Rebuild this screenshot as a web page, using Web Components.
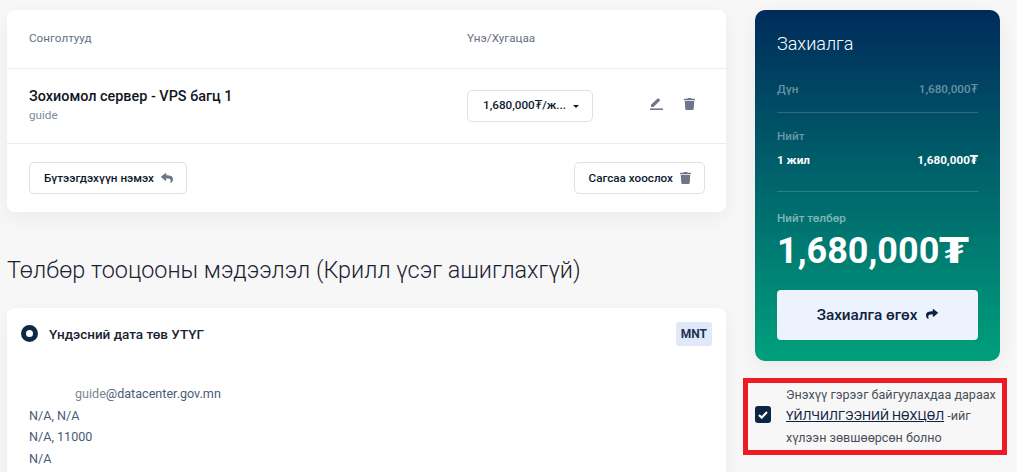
<!DOCTYPE html>
<html>
<head>
<meta charset="utf-8">
<title>Захиалга</title>
<style>
    html, body { margin: 0; height: 472px; overflow: hidden; background: #f7f7f7; }
    body { font-family: Roboto, "Noto Sans", sans-serif; }
</style>
</head>
<body>
<checkout-page>
    <cart-card slot="main"></cart-card>
    <billing-section slot="main"></billing-section>
    <order-summary slot="side"></order-summary>
    <terms-box slot="side"></terms-box>
</checkout-page>

<script>
const ICONS = {
    trash: '<svg width="11" height="12" viewBox="0 0 448 512" preserveAspectRatio="none" fill="currentColor"><path d="M432 32H312l-9-19A24 24 0 0 0 281 0H167a24 24 0 0 0-21 13l-9 19H16A16 16 0 0 0 0 48v32a16 16 0 0 0 16 16h416a16 16 0 0 0 16-16V48a16 16 0 0 0-16-16zM53 467a48 48 0 0 0 48 45h246a48 48 0 0 0 48-45l21-339H32z"/></svg>',
    pen: '<svg width="13" height="12" viewBox="0 0 13 12" fill="currentColor"><path d="M0 10.4h13V12H0z"/><path d="M1 8.900V6.700L7.600.6c.3-.3.7-.3 1 0l1.300 1.200c.3.3.3.7 0 1L3.400 8.900z"/></svg>',
    reply: '<svg width="12" height="10" viewBox="0 30 512 452" preserveAspectRatio="none" fill="currentColor"><path d="M8.309 189.836L184.313 37.851C199.719 24.546 224 35.347 224 56.015v80.053c160.629 1.839 288 34.032 288 186.258 0 61.441-39.581 122.309-83.333 154.132-13.653 9.931-33.111-2.533-28.077-18.631 45.344-145.012-21.507-183.51-176.59-185.742V360c0 20.7-24.3 31.453-39.687 18.164l-176.004-152c-11.071-9.562-11.086-26.753 0-36.328z"/></svg>',
    share: '<svg width="12" height="10" viewBox="0 30 512 452" preserveAspectRatio="none" fill="currentColor"><path d="M503.691 189.836L327.687 37.851C312.281 24.546 288 35.347 288 56.015v80.053C127.371 137.907 0 170.1 0 322.326c0 61.441 39.581 122.309 83.333 154.132 13.653 9.931 33.111-2.533 28.077-18.631C66.066 312.814 132.917 274.316 288 272.085V360c0 20.7 24.3 31.453 39.687 18.164l176.004-152c11.071-9.562 11.086-26.753 0-36.328z"/></svg>',
    check: '<svg width="10" height="8" viewBox="0 0 11 9" fill="none" stroke="#fff" stroke-width="2.400"><path d="M1 4.600 4 7.400 10 1.200"/></svg>'
};

// the tugrik sign in the reference comes from a wider fallback face
const TG = '<span style="font-family:\'DejaVu Sans\',sans-serif">₮</span>';
const TG_WIDE = '<span style="font-family:\'DejaVu Sans\',sans-serif;display:inline-block;transform:scaleX(1.2);transform-origin:left;margin-right:.12em">₮</span>';

const pageTemplate = document.createElement('template');
pageTemplate.innerHTML = `
    <style>
        :host {
            display: flex;
            gap: 29px;
            padding: 10px 17px 0 7px;
            color: #0e2240;
        }
        .main { width: 719px; flex: none; }
        .side { width: 245px; flex: none; }
    </style>
    <div class="main"><slot name="main"></slot></div>
    <div class="side"><slot name="side"></slot></div>
`;

class CheckoutPage extends HTMLElement {
    constructor () {
        super();
        this.attachShadow({ mode: 'open' }).appendChild(pageTemplate.content.cloneNode(true));
    }
}

const outlineBtnTemplate = document.createElement('template');
outlineBtnTemplate.innerHTML = `
    <style>
        :host {
            display: inline-flex;
            align-items: center;
            gap: 7px;
            height: 30px;
            padding: 0 13px 0 14px;
            background: #fff;
            border: 1px solid #dfe1e5;
            border-radius: 5px;
            font-size: 11.700px;
            font-weight: 500;
            color: #0e1a2e;
            white-space: nowrap;
        }
        ::slotted(span) { display: flex; color: #6d7787; }
    </style>
    <slot></slot>
    <slot name="icon"></slot>
`;

class OutlineBtn extends HTMLElement {
    constructor () {
        super();
        this.attachShadow({ mode: 'open' }).appendChild(outlineBtnTemplate.content.cloneNode(true));
    }
}

const cartTemplate = document.createElement('template');
cartTemplate.innerHTML = `
    <style>
        :host {
            display: block;
            background: #fff;
            border-radius: 8px;
            box-shadow: 0 6px 20px rgba(0, 0, 0, .05);
        }
        .row { display: flex; align-items: center; padding: 0 21px 0 22px; }
        .head {
            box-sizing: border-box;
            height: 59px;
            padding-bottom: 3px;
            font-size: 11.700px;
            color: #66707f;
            border-bottom: 1px solid #ececec;
        }
        .item {
            height: 74px;
            border-bottom: 1px solid #ececec;
        }
        .col-a { width: 438px; flex: none; }
        .item .col-a { padding-bottom: 2px; }
        .title { font-size: 14.400px; font-weight: 500; color: #10161f; line-height: 20px; }
        .sub { font-size: 11.700px; color: #7f8a9a; line-height: 18px; margin-top: -1px; }
        .price {
            box-sizing: border-box;
            display: flex;
            align-items: center;
            width: 126px;
            height: 32px;
            padding: 0 13px 2px 15px;
            border: 1px solid #dfe1e5;
            border-radius: 5px;
            font-size: 11.700px;
            font-weight: 500;
            color: #0e1a2e;
            white-space: nowrap;
        }
        .price > span { flex: 1; }
        .caret {
            width: 0;
            height: 0;
            margin-top: 2px;
            border: 3.500px solid transparent;
            border-top: 3.500px solid #0e1a2e;
            border-bottom: 0;
        }
        .actions { display: flex; gap: 21px; margin-left: 57px; padding-bottom: 4px; color: #6d7787; align-items: center; }
        .actions span { display: flex; }
        .foot { height: 68px; justify-content: space-between; }
    </style>
    <div class="row head">
        <div class="col-a">Сонголтууд</div>
        <div>Үнэ/Хугацаа</div>
    </div>
    <div class="row item">
        <div class="col-a">
            <div class="title">Зохиомол сервер - VPS багц 1</div>
            <div class="sub">guide</div>
        </div>
        <div class="price"><span>1,680,000${TG}/ж...</span><i class="caret"></i></div>
        <div class="actions">
            <span>${ICONS.pen}</span>
            <span>${ICONS.trash}</span>
        </div>
    </div>
    <div class="row foot">
        <outline-btn>Бүтээгдэхүүн нэмэх<span slot="icon">${ICONS.reply}</span></outline-btn>
        <outline-btn>Сагсаа хоослох<span slot="icon">${ICONS.trash}</span></outline-btn>
    </div>
`;

class CartCard extends HTMLElement {
    constructor () {
        super();
        this.attachShadow({ mode: 'open' }).appendChild(cartTemplate.content.cloneNode(true));
    }
}

const billingTemplate = document.createElement('template');
billingTemplate.innerHTML = `
    <style>
        :host { display: block; }
        h2 {
            margin: 41px 0 21px;
            font-size: 23.400px;
            line-height: 34px;
            font-weight: 300;
            color: #1a2230;
        }
        .card {
            background: #fff;
            border-radius: 8px;
            padding: 14px 14px 0 14px;
            height: 200px;
            box-shadow: 0 6px 20px rgba(0, 0, 0, .05);
        }
        .top { display: flex; align-items: center; height: 24px; }
        .radio {
            box-sizing: border-box;
            width: 17px;
            height: 17px;
            border-radius: 50%;
            border: 5px solid #0c2a47;
            margin-right: 11px;
            margin-top: -2px;
        }
        .name { font-size: 13.500px; font-weight: 500; color: #1a2230; flex: 1; margin-top: -1px; }
        .tag {
            background: #dfe9fa;
            color: #1c3150;
            font-size: 12px;
            font-weight: 700;
            border-radius: 3px;
            padding: 0 5px;
            line-height: 24px;
        }
        .lines { margin-top: 37px; padding-left: 8px; font-size: 12.600px; line-height: 21.600px; color: #4a5b78; }
        .mail { padding-left: 46px; }
        .mail b { font-weight: 400; color: #7f8590; }
    </style>
    <h2>Төлбөр тооцооны мэдээлэл (Крилл үсэг ашиглахгүй)</h2>
    <div class="card">
        <div class="top">
            <span class="radio"></span>
            <span class="name">Үндэсний дата төв УТҮГ</span>
            <span class="tag">MNT</span>
        </div>
        <div class="lines">
            <div class="mail"><b>guide</b>@datacenter.gov.mn</div>
            <div>N/A, N/A</div>
            <div>N/A, 11000</div>
            <div>N/A</div>
        </div>
    </div>
`;

class BillingSection extends HTMLElement {
    constructor () {
        super();
        this.attachShadow({ mode: 'open' }).appendChild(billingTemplate.content.cloneNode(true));
    }
}

const summaryTemplate = document.createElement('template');
summaryTemplate.innerHTML = `
    <style>
        :host {
            display: block;
            box-sizing: border-box;
            height: 351px;
            padding: 22px 22px 0;
            border-radius: 10px;
            color: #fff;
            background: linear-gradient(180deg, #002b5b 0%, #00a07c 100%);
            box-shadow: 0 6px 20px rgba(0, 0, 0, .06);
        }
        h3 { margin: 0; font-size: 18px; font-weight: 300; line-height: 24px; }
        .row { display: flex; justify-content: space-between; font-size: 11.700px; font-weight: 500; line-height: 16px; }
        .dim { color: rgba(255, 255, 255, .42); }
        .sum { margin-top: 25px; padding-bottom: 15px; border-bottom: 1px solid rgba(255, 255, 255, .17); }
        .net { margin-top: 15px; padding-bottom: 23px; border-bottom: 1px solid rgba(255, 255, 255, .17); }
        .net-label { font-size: 11.700px; font-weight: 500; line-height: 16px; margin-bottom: 8px; }
        .net .row { font-weight: 700; }
        .total-label { margin-top: 19px; font-size: 11.700px; font-weight: 500; line-height: 14px; color: rgba(255, 255, 255, .5); }
        .total { font-size: 36px; font-weight: 700; line-height: 42px; margin-top: 5px; white-space: nowrap; }
        .btn {
            display: flex;
            align-items: center;
            justify-content: center;
            gap: 9px;
            height: 50px;
            margin-top: 18px;
            background: #edf3fd;
            border-radius: 4px;
            color: #0e2240;
            font-size: 15.300px;
            font-weight: 500;
        }
        .btn span { display: flex; margin-top: -2px; }
    </style>
    <h3>Захиалга</h3>
    <div class="sum row dim"><span>Дүн</span><span>1,680,000${TG}</span></div>
    <div class="net">
        <div class="net-label dim">Нийт</div>
        <div class="row"><span>1 жил</span><span>1,680,000${TG}</span></div>
    </div>
    <div class="total-label">Нийт төлбөр</div>
    <div class="total">1,680,000${TG_WIDE}</div>
    <div class="btn">Захиалга өгөх <span>${ICONS.share}</span></div>
`;

class OrderSummary extends HTMLElement {
    constructor () {
        super();
        this.attachShadow({ mode: 'open' }).appendChild(summaryTemplate.content.cloneNode(true));
    }
}

const termsTemplate = document.createElement('template');
termsTemplate.innerHTML = `
    <style>
        :host {
            display: flex;
            box-sizing: border-box;
            align-items: center;
            gap: 15px;
            width: 264px;
            height: 77px;
            margin: 17px 0 0 -12px;
            padding: 0 0 1px 7px;
            border: 5px solid #ed1c24;
            font-size: 12.600px;
            line-height: 21.600px;
            color: #4a4f57;
        }
        .box {
            flex: none;
            display: flex;
            align-items: center;
            justify-content: center;
            width: 16px;
            height: 17px;
            margin-top: -3px;
            background: #0c2545;
            border-radius: 3px;
        }
        a { color: #0e2240; text-decoration: underline; }
    </style>
    <span class="box">${ICONS.check}</span>
    <div>Энэхүү гэрээг байгуулахдаа дараах <a>ҮЙЛЧИЛГЭЭНИЙ НӨХЦӨЛ</a> -ийг хүлээн зөвшөөрсөн болно</div>
`;

class TermsBox extends HTMLElement {
    constructor () {
        super();
        this.attachShadow({ mode: 'open' }).appendChild(termsTemplate.content.cloneNode(true));
    }
}

customElements.define('checkout-page', CheckoutPage);
customElements.define('outline-btn', OutlineBtn);
customElements.define('cart-card', CartCard);
customElements.define('billing-section', BillingSection);
customElements.define('order-summary', OrderSummary);
customElements.define('terms-box', TermsBox);
</script>
</body>
</html>
